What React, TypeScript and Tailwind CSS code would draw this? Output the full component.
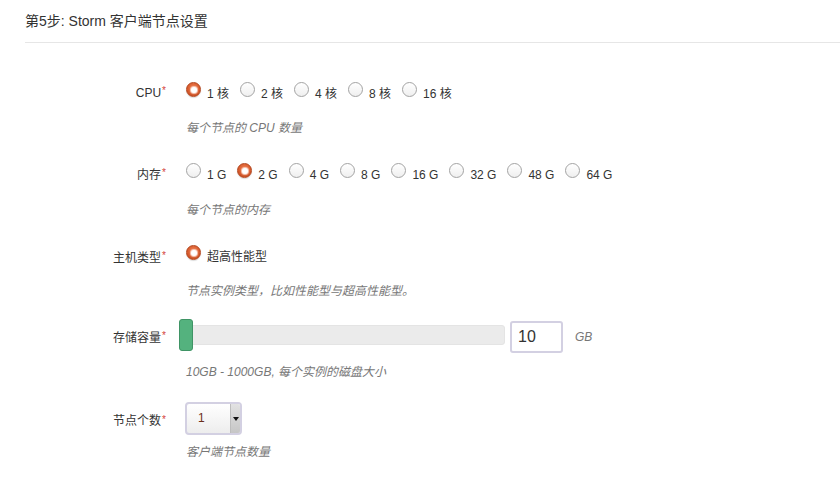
import React, { useState } from 'react'

const FONT = { fontFamily: '"Liberation Sans", "Noto Sans CJK SC", sans-serif' }

type RadioProps = {
  label: string
  checked: boolean
  onSelect: () => void
}

const Radio = ({ label, checked, onSelect }: RadioProps) => (
  <label className="flex items-start h-[20px] cursor-pointer" onClick={onSelect}>
    {checked ? (
      <span className="mt-[3px] w-[15px] h-[15px] rounded-full border border-[#b2441c] bg-[radial-gradient(circle_at_50%_35%,#ee7a4c_0%,#d65a2c_60%,#bd4a20_100%)] flex items-center justify-center shadow-[0_1px_1px_rgba(0,0,0,0.15)]">
        <span className="w-[6px] h-[6px] rounded-full bg-white shadow-[0_0_1px_1px_rgba(255,230,220,0.8)]" />
      </span>
    ) : (
      <span className="mt-[3px] w-[15px] h-[15px] rounded-full border border-[#a3a3a3] bg-gradient-to-b from-white to-[#efefef]" />
    )}
    <span className="ml-[6px] pt-[8px] text-[12px] leading-[14px] text-[#333]">{label}</span>
  </label>
)

const Req = () => <span className="text-[#d43f3a] text-[10px] align-top ml-[1px] relative top-[-2px]">*</span>

export default function App() {
  const [cpu, setCpu] = useState('1 核')
  const [mem, setMem] = useState('2 G')
  const [size, setSize] = useState('10')

  const cpus = ['1 核', '2 核', '4 核', '8 核', '16 核']
  const mems = ['1 G', '2 G', '4 G', '8 G', '16 G', '32 G', '48 G', '64 G']

  return (
    <div className="w-[840px] h-[478px] bg-white overflow-hidden" style={FONT}>
      <div className="ml-[25px] h-[43px] border-b border-[#e6e6e6] flex items-center">
        <h3 className="text-[14px] text-[#333] pt-[1px]">第5步: Storm 客户端节点设置</h3>
      </div>

      {/* CPU */}
      <div className="mt-[36px] h-[20px] flex items-start">
        <div className="w-[166px] text-right text-[12px] leading-[20px] pt-[4px] text-[#333]">CPU<Req /></div>
        <div className="ml-[20px] flex gap-x-[11px]">
          {cpus.map((c) => (
            <Radio key={c} label={c} checked={cpu === c} onSelect={() => setCpu(c)} />
          ))}
        </div>
      </div>
      <p className="ml-[186px] mt-[21px] text-[12px] leading-[17px] italic text-[#777]">每个节点的 CPU 数量</p>

      {/* 内存 */}
      <div className="mt-[23px] h-[20px] flex items-start">
        <div className="w-[166px] text-right text-[12px] leading-[20px] pt-[5px] text-[#333]">内存<Req /></div>
        <div className="ml-[20px] flex gap-x-[11px]">
          {mems.map((m) => (
            <Radio key={m} label={m} checked={mem === m} onSelect={() => setMem(m)} />
          ))}
        </div>
      </div>
      <p className="ml-[186px] mt-[22px] text-[12px] leading-[17px] italic text-[#777]">每个节点的内存</p>

      {/* 主机类型 */}
      <div className="mt-[23px] h-[20px] flex items-start">
        <div className="w-[166px] text-right text-[12px] leading-[20px] pt-[6px] text-[#333]">主机类型<Req /></div>
        <div className="ml-[20px] flex">
          <Radio label="超高性能型" checked onSelect={() => {}} />
        </div>
      </div>
      <p className="ml-[186px] mt-[21px] text-[12px] leading-[17px] italic text-[#777]">节点实例类型，比如性能型与超高性能型。</p>

      {/* 存储容量 */}
      <div className="mt-[19px] h-[34px] flex items-start">
        <div className="w-[166px] text-right text-[12px] leading-[34px] pt-[2px] text-[#333]">存储容量<Req /></div>
        <div className="ml-[13px] flex items-start">
          <div className="relative w-[326px] h-[32px]">
            <div className="absolute left-[1px] right-0 top-[6px] h-[20px] rounded-[3px] bg-[#ebebeb] border border-[#e4e4e4]" />
            <div className="absolute left-0 top-0 w-[14px] h-[32px] rounded-[3px] bg-[#54b27e] border border-[#3f9465]" />
          </div>
          <input
            value={size}
            onChange={(e) => setSize(e.target.value)}
            className="ml-[5px] mt-[2px] w-[53px] h-[32px] border-2 border-[#d3d0e2] rounded-[3px] px-[6px] text-[16px] text-[#333] outline-none"
            style={FONT}
          />
          <span className="ml-[12px] mt-[2px] leading-[32px] text-[12px] italic text-[#777]">GB</span>
        </div>
      </div>
      <p className="ml-[186px] mt-[11px] text-[12px] leading-[17px] italic text-[#777]">10GB - 1000GB, 每个实例的磁盘大小</p>

      {/* 节点个数 */}
      <div className="mt-[21px] h-[33px] flex items-start">
        <div className="w-[166px] text-right text-[12px] leading-[33px] pt-[3px] text-[#333]">节点个数<Req /></div>
        <div className="ml-[19px] w-[57px] h-[33px] border-2 border-[#d3d0e2] rounded-[4px] flex overflow-hidden bg-gradient-to-b from-white to-[#ededed]">
          <span className="flex-1 pl-[11px] leading-[29px] text-[12px] font-medium text-[#6b2f1a]">1</span>
          <span className="w-[10px] border-l border-[#bdbdbd] bg-gradient-to-b from-[#e2e2e2] to-[#c6c6c6] flex items-center justify-center">
            <svg width="6" height="4" viewBox="0 0 6 4">
              <path d="M0 0 L6 0 L3 4 Z" fill="#111" />
            </svg>
          </span>
        </div>
      </div>
      <p className="ml-[186px] mt-[9px] text-[12px] leading-[17px] italic text-[#777]">客户端节点数量</p>
    </div>
  )
}
